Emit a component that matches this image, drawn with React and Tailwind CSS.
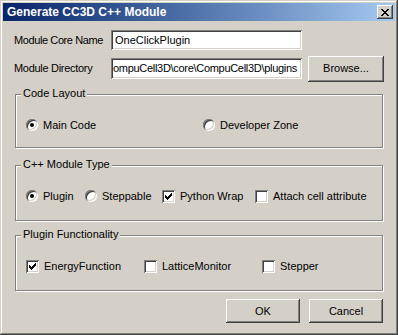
import React from 'react';

const raised = 'shadow-[inset_-1px_-1px_#404040,inset_1px_1px_#ffffff,inset_-2px_-2px_#808080,inset_2px_2px_#d4d0c8]';
const sunken = 'shadow-[inset_1px_1px_#808080,inset_-1px_-1px_#ffffff,inset_2px_2px_#404040,inset_-2px_-2px_#d4d0c8]';

function Radio({ checked, label }) {
    return (
        <div className="flex items-center gap-[5px]">
            <span className={`w-[12px] h-[12px] rounded-full bg-white flex items-center justify-center ${sunken}`}>
                {checked && <span className="w-[4px] h-[4px] rounded-full bg-black" />}
            </span>
            <span>{label}</span>
        </div>
    );
}

function Check({ checked, label }) {
    return (
        <div className="flex items-center gap-[5px]">
            <span className={`w-[13px] h-[13px] bg-white flex items-center justify-center ${sunken}`}>
                {checked && (
                    <svg width="7" height="7" viewBox="0 0 7 7" shapeRendering="crispEdges">
                        <path
                            d="M0 2h1v3H0z M1 3h1v3H1z M2 4h1v3H2z M3 3h1v3H3z M4 2h1v3H4z M5 1h1v3H5z M6 0h1v3H6z"
                            fill="#000"
                        />
                    </svg>
                )}
            </span>
            <span>{label}</span>
        </div>
    );
}

function Group({ title, className, children }) {
    return (
        <div className={`relative ml-[1px] w-[368px] border border-[#808080] shadow-[inset_1px_1px_#ffffff,1px_1px_#ffffff] ${className}`}>
            <span className="absolute -top-[8px] left-[5px] px-[2px] bg-[#d4d0c8] leading-[13px]">{title}</span>
            {children}
        </div>
    );
}

function Button({ children, className }) {
    return (
        <div className={`flex items-center justify-center bg-[#d4d0c8] ${raised} ${className}`}>
            {children}
        </div>
    );
}

export default function App() {
    return (
        <div
            className={`w-[398px] h-[335px] bg-[#d4d0c8] p-[3px] text-[11px] leading-[13px] text-black font-['Liberation_Sans',Arial,sans-serif] shadow-[inset_-1px_-1px_#404040,inset_1px_1px_#d4d0c8,inset_-2px_-2px_#808080,inset_2px_2px_#ffffff]`}
        >
            {/* title bar */}
            <div className="h-[18px] flex items-center justify-between pl-[4px] pr-[2px] bg-linear-to-r from-[#0a246a] to-[#a6caf0]">
                <span className="text-white font-bold text-[12px]">Generate CC3D C++ Module</span>
                <div className={`w-[16px] h-[14px] bg-[#d4d0c8] flex items-center justify-center ${raised}`}>
                    <svg width="8" height="7" viewBox="0 0 8 7" shapeRendering="crispEdges">
                        <path
                            d="M0 0h2v1H0z M6 0h2v1H6z M1 1h2v1H1z M5 1h2v1H5z M2 2h4v1H2z M3 3h2v1H3z M2 4h4v1H2z M1 5h2v1H1z M5 5h2v1H5z M0 6h2v1H0z M6 6h2v1H6z"
                            fill="#000"
                        />
                    </svg>
                </div>
            </div>

            <div className="px-[11px]">
                <div className="mt-[9px] h-[20px] flex items-center">
                    <span className="w-[97px] tracking-[-0.4px]">Module Core Name</span>
                    <div className={`w-[191px] h-[20px] bg-white flex items-center pl-[4px] ${sunken}`}>
                        OneClickPlugin
                    </div>
                </div>

                <div className="mt-[5px] h-[27px] flex items-center">
                    <span className="w-[97px] tracking-[-0.3px]">Module Directory</span>
                    <div className={`w-[191px] h-[21px] bg-white flex items-center pl-[2px] ${sunken}`}>
                        <span className="whitespace-nowrap tracking-[-0.3px]">ompuCell3D\core\CompuCell3D\plugins</span>
                    </div>
                    <Button className="ml-[6px] w-[76px] h-[26px]">Browse...</Button>
                </div>

                <Group title="Code Layout" className="mt-[12px] h-[54px]">
                    <div className="h-full flex items-center pl-[10px] pt-[8px]">
                        <div className="w-[177px]"><Radio checked label="Main Code" /></div>
                        <Radio label="Developer Zone" />
                    </div>
                </Group>

                <Group title="C++ Module Type" className="mt-[17px] h-[56px]">
                    <div className="h-full flex items-center pl-[10px] pt-[6px]">
                        <div className="w-[59px]"><Radio checked label="Plugin" /></div>
                        <div className="w-[77px]"><Radio label="Steppable" /></div>
                        <div className="w-[93px]"><Check checked label="Python Wrap" /></div>
                        <Check label="Attach cell attribute" />
                    </div>
                </Group>

                <Group title="Plugin Functionality" className="mt-[14px] h-[56px]">
                    <div className="h-full flex items-center pl-[10px] pt-[6px]">
                        <div className="w-[118px]"><Check checked label="EnergyFunction" /></div>
                        <div className="w-[118px]"><Check label="LatticeMonitor" /></div>
                        <Check label="Stepper" />
                    </div>
                </Group>

                <div className="mt-[8px] flex justify-end gap-[9px] pr-[1px]">
                    <Button className="w-[74px] h-[24px]">OK</Button>
                    <Button className="w-[74px] h-[24px]">Cancel</Button>
                </div>
            </div>
        </div>
    );
}
